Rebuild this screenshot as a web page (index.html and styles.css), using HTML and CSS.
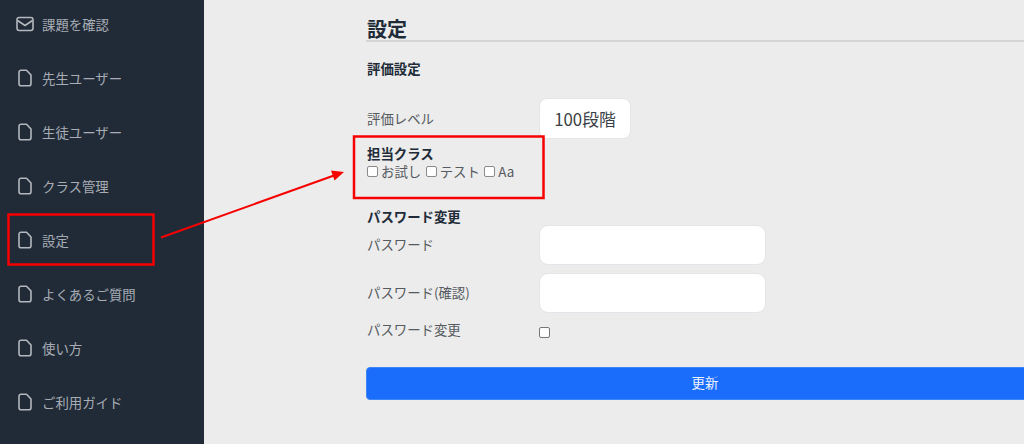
FILE: index.html
```html
<!DOCTYPE html>
<html lang="ja">
<head>
<meta charset="utf-8">
<title>設定</title>
<link rel="stylesheet" href="styles.css">
</head>
<body>
<div class="page">
  <nav class="sidebar">
    <a class="nav-item"><svg class="icon" viewBox="0 0 18 18"><rect x="1" y="2.5" width="16" height="13" rx="2.2"/><path d="M1.5 5.5 9 10.5l7.5-5"/></svg>課題を確認</a>
    <a class="nav-item"><svg class="icon" viewBox="0 0 18 18"><path d="M3 3.2A2 2 0 0 1 5 1.2h5.5L15 6v8.8a2 2 0 0 1-2 2H5a2 2 0 0 1-2-2z"/></svg>先生ユーザー</a>
    <a class="nav-item"><svg class="icon" viewBox="0 0 18 18"><path d="M3 3.2A2 2 0 0 1 5 1.2h5.5L15 6v8.8a2 2 0 0 1-2 2H5a2 2 0 0 1-2-2z"/></svg>生徒ユーザー</a>
    <a class="nav-item"><svg class="icon" viewBox="0 0 18 18"><path d="M3 3.2A2 2 0 0 1 5 1.2h5.5L15 6v8.8a2 2 0 0 1-2 2H5a2 2 0 0 1-2-2z"/></svg>クラス管理</a>
    <a class="nav-item"><svg class="icon" viewBox="0 0 18 18"><path d="M3 3.2A2 2 0 0 1 5 1.2h5.5L15 6v8.8a2 2 0 0 1-2 2H5a2 2 0 0 1-2-2z"/></svg>設定</a>
    <a class="nav-item"><svg class="icon" viewBox="0 0 18 18"><path d="M3 3.2A2 2 0 0 1 5 1.2h5.5L15 6v8.8a2 2 0 0 1-2 2H5a2 2 0 0 1-2-2z"/></svg>よくあるご質問</a>
    <a class="nav-item"><svg class="icon" viewBox="0 0 18 18"><path d="M3 3.2A2 2 0 0 1 5 1.2h5.5L15 6v8.8a2 2 0 0 1-2 2H5a2 2 0 0 1-2-2z"/></svg>使い方</a>
    <a class="nav-item"><svg class="icon" viewBox="0 0 18 18"><path d="M3 3.2A2 2 0 0 1 5 1.2h5.5L15 6v8.8a2 2 0 0 1-2 2H5a2 2 0 0 1-2-2z"/></svg>ご利用ガイド</a>
  </nav>
  <main class="main">
    <h1 class="title">設定</h1>
    <h2 class="section section-eval">評価設定</h2>
    <div class="row row-level">
      <span class="label">評価レベル</span>
      <div class="select">100段階</div>
    </div>
    <div class="classes">
      <h2 class="section">担当クラス</h2>
      <div class="checks">
        <label class="check"><input type="checkbox">お試し</label>
        <label class="check"><input type="checkbox">テスト</label>
        <label class="check"><input type="checkbox">Aa</label>
      </div>
    </div>
    <h2 class="section section-pass">パスワード変更</h2>
    <div class="row row-pass">
      <span class="label">パスワード</span>
      <input class="field" type="password">
    </div>
    <div class="row row-pass">
      <span class="label">パスワード(確認)</span>
      <input class="field" type="password">
    </div>
    <div class="row row-toggle">
      <span class="label">パスワード変更</span>
      <input class="toggle" type="checkbox">
    </div>
    <button class="submit" type="button">更新</button>
  </main>
  <svg class="notes" viewBox="0 0 1024 444" width="1024" height="444">
    <rect x="8.500" y="214.500" width="145" height="50"/>
    <rect x="354" y="136.500" width="189.500" height="61.500"/>
    <line x1="161" y1="237.500" x2="334" y2="175.500"/>
    <polygon points="344,172 331,170.500 334.500,180.500"/>
  </svg>
</div>
</body>
</html>
```
FILE: styles.css
```css
* { box-sizing: border-box; }
html, body { margin: 0; padding: 0; }
body {
  font-family: "Noto Sans CJK JP", "Noto Sans", sans-serif;
  color: #212b38;
}
.page {
  position: relative;
  display: flex;
  width: 1024px;
  height: 444px;
  overflow: hidden;
  background: #ececec;
}
.sidebar {
  flex: 0 0 204px;
  display: flex;
  flex-direction: column;
  background: #212b38;
}
.nav-item {
  display: flex;
  align-items: center;
  gap: 8px;
  height: 54px;
  margin-top: -3px;
  margin-bottom: 3px;
  padding-left: 16px;
  font-size: 13.4px;
  color: #a8adb5;
}
.icon {
  width: 18px;
  height: 18px;
  fill: none;
  stroke: #b4b8bd;
  stroke-width: 1.6;
  stroke-linejoin: round;
}
.main {
  flex: 0 0 auto;
  width: 678px;
  margin-left: 162px;
  padding-top: 16px;
  font-size: 13.4px;
}
.title {
  margin: 0;
  height: 26px;
  padding-left: 1px;
  font-size: 20px;
  line-height: 26px;
  font-weight: 700;
  border-bottom: 2px solid #d4d4d4;
}
.section {
  margin: 0;
  padding-left: 1px;
  font-size: 13.4px;
  line-height: 18px;
  font-weight: 700;
}
.section-eval { margin-top: 17px; }
.section-pass { margin-top: 13px; }
.row {
  display: flex;
  align-items: center;
}
.label {
  flex: 0 0 173px;
  padding-left: 1px;
  color: #555a60;
}
.row-level { margin-top: 21px; height: 41px; }
.row-level .label { padding-bottom: 2px; }
.select {
  width: 92px;
  height: 41px;
  display: flex;
  align-items: center;
  justify-content: center;
  background: #fff;
  border: 1px solid #e2e5e9;
  border-radius: 8px;
  font-size: 16.8px;
  color: #3a3f45;
}
.classes { margin-top: 5px; height: 50px; }
.checks {
  display: flex;
  gap: 4.500px;
  padding-left: 1px;
  line-height: 18px;
  color: #555a60;
}
.check {
  display: flex;
  align-items: center;
  gap: 3px;
}
.check input {
  width: 11px;
  height: 11px;
  margin: 0;
  appearance: none;
  background: #fff;
  border: 1px solid #8a8a8a;
  border-radius: 2px;
}
.row-pass { height: 40px; margin-bottom: 8px; }
.row-pass .label { padding-bottom: 2px; }
.field {
  width: 227px;
  height: 40px;
  background: #fff;
  border: 1px solid #e2e5e9;
  border-radius: 9px;
  outline: 0;
}
.row-toggle { height: 18px; }
.row-toggle .label { padding-bottom: 3px; }
.toggle {
  width: 11px;
  height: 11px;
  margin: 4px 0 0;
  appearance: none;
  background: #fff;
  border: 1px solid #777;
  border-radius: 2px;
}
.submit {
  display: block;
  width: 100%;
  height: 33px;
  margin-top: 28px;
  padding: 0 0 4px;
  background: #1a6dfa;
  border: 1px solid #3f86f5;
  border-radius: 4px;
  color: #f0f4fc;
  font-family: inherit;
  font-size: 13.4px;
}
.notes {
  position: absolute;
  left: 0;
  top: 0;
}
.notes rect {
  fill: none;
  stroke: #f70000;
  stroke-width: 2.500;
}
.notes line {
  stroke: #f70000;
  stroke-width: 2;
}
.notes polygon { fill: #f70000; }
```
